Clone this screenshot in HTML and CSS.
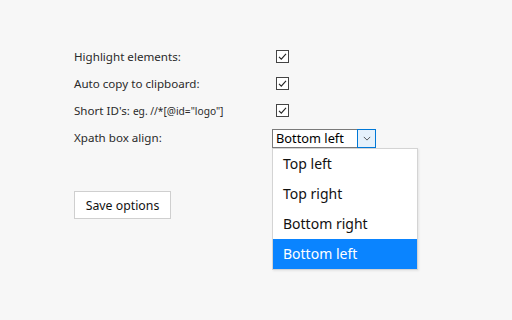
FILE: index.html
```html
<!DOCTYPE html>
<html>
<head>
<meta charset="utf-8">
<link rel="stylesheet" href="styles.css">
</head>
<body>
<div class="page">
  <div class="options">
    <div class="label">Highlight elements:</div>
    <div class="ctrl"><span class="check"><svg viewBox="0 0 13 13" width="13" height="13"><path d="M3 6.8 L5.3 9.2 L10 3.8" fill="none" stroke="#222" stroke-width="1.1"/></svg></span></div>
    <div class="label">Auto copy to clipboard:</div>
    <div class="ctrl"><span class="check"><svg viewBox="0 0 13 13" width="13" height="13"><path d="M3 6.8 L5.3 9.2 L10 3.8" fill="none" stroke="#222" stroke-width="1.1"/></svg></span></div>
    <div class="label">Short ID's: <span class="small">eg. //*[@id="logo"]</span></div>
    <div class="ctrl"><span class="check"><svg viewBox="0 0 13 13" width="13" height="13"><path d="M3 6.8 L5.3 9.2 L10 3.8" fill="none" stroke="#222" stroke-width="1.1"/></svg></span></div>
    <div class="label">Xpath box align:</div>
    <div class="ctrl">
      <div class="select">
        <span class="value">Bottom left</span>
        <span class="arrow"><svg viewBox="0 0 10 6" width="8" height="5"><path d="M1 1 L5 5 L9 1" fill="none" stroke="#333" stroke-width="1"/></svg></span>
        <ul class="menu">
          <li>Top left</li>
          <li>Top right</li>
          <li>Bottom right</li>
          <li class="active">Bottom left</li>
        </ul>
      </div>
    </div>
  </div>
  <button class="save">Save options</button>
</div>
</body>
</html>
```
FILE: styles.css
```css
html, body {
  margin: 0;
  padding: 0;
  background: #f7f7f7;
}
body {
  font-family: "Noto Sans", "Open Sans", sans-serif;
  color: #222;
  width: 512px;
  height: 320px;
  overflow: hidden;
}
.page {
  padding: 43px 0 0 74px;
}
.options {
  display: grid;
  grid-template-columns: 198px 150px;
  grid-auto-rows: 27px;
  align-items: center;
}
.label {
  font-size: 11.6px;
  color: #2a2a2a;
}
.small {
  font-size: 10.2px;
}
.ctrl {
  display: flex;
  align-items: center;
  height: 27px;
}
.check {
  display: inline-block;
  width: 11px;
  height: 11px;
  border: 1px solid #444;
  background: #fff;
  margin-left: 4px;
  position: relative;
}
.check svg {
  position: absolute;
  left: -1px;
  top: -1px;
}
.select {
  position: relative;
  display: flex;
  width: 102px;
  height: 17px;
  border: 1px solid #7a7a7a;
  background: #fff;
  margin-top: 1px;
}
.value {
  flex: 1;
  font-size: 12.8px;
  line-height: 17px;
  padding-left: 3px;
  color: #000;
}
.arrow {
  width: 17px;
  height: 17px;
  margin: -1px -1px -1px 0;
  border: 1px solid #0078d7;
  background: #e5f1fb;
  display: flex;
  align-items: center;
  justify-content: center;
}
.menu {
  position: absolute;
  left: -1px;
  top: 18px;
  width: 144px;
  margin: 0;
  padding: 0;
  list-style: none;
  background: #fff;
  border: 1px solid #d4d4d4;
  box-shadow: 1px 1px 2px rgba(0,0,0,0.08);
}
.menu li {
  height: 30px;
  line-height: 30px;
  padding-left: 10px;
  font-size: 14px;
  color: #111;
}
.menu li.active {
  background: #0a84ff;
  color: #fff;
}
.save {
  margin-top: 40px;
  font-family: inherit;
  font-size: 12.3px;
  color: #111;
  background: #fff;
  border: 1px solid #cfcfcf;
  border-radius: 0;
  width: 97px;
  height: 28px;
  padding: 0;
}
```
